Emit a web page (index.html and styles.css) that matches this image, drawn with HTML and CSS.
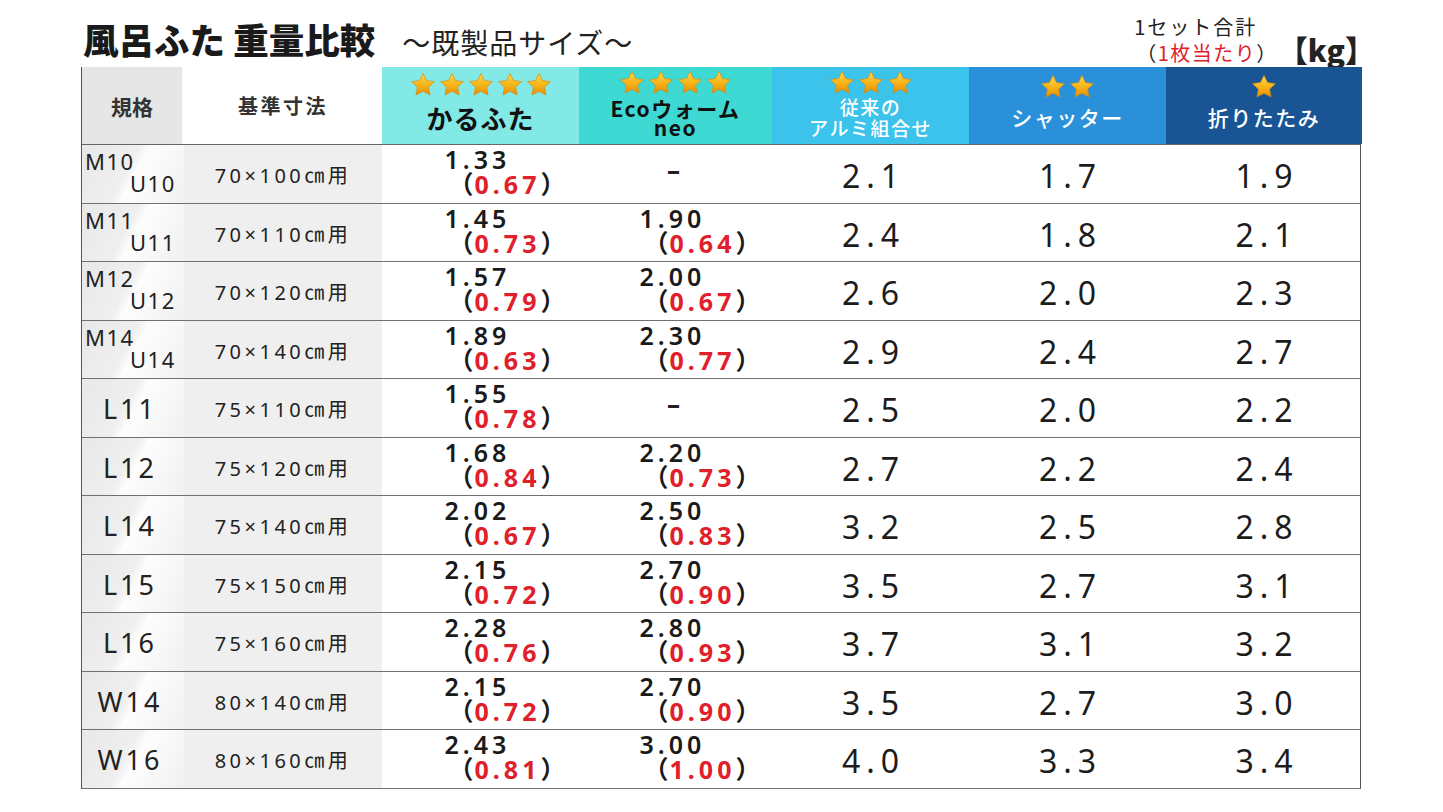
FILE: index.html
```html
<!DOCTYPE html>
<html lang="ja">

<head>
    <meta charset="UTF-8">
    <title>風呂ふた 重量比較</title>
    <link rel="stylesheet" href="styles.css">
</head>

<body>
    <svg class="defs" width="0" height="0">
        <defs>
            <linearGradient id="gold" x1="0" y1="0" x2="0" y2="1">
                <stop offset="0" stop-color="#ffd84a" />
                <stop offset="0.55" stop-color="#f7b319" />
                <stop offset="1" stop-color="#e48d05" />
            </linearGradient>
            <symbol id="star" viewBox="0 0 24 24">
                <path d="M12 1.2l3.2 6.7 7.3 1-5.3 5.1 1.3 7.3L12 17.8l-6.5 3.5 1.3-7.3-5.3-5.1 7.3-1z" fill="url(#gold)" stroke="#d9870a" stroke-width="0.6" />
            </symbol>
        </defs>
    </svg>

    <div class="sheet">
        <div class="top">
            <h1 class="title">風呂ふた 重量比較<span class="sub">～既製品サイズ～</span></h1>
            <div class="unit">
                <div class="unit-note">
                    <div>1セット合計</div>
                    <div class="unit-each">（<span class="red">1枚当たり</span>）</div>
                </div>
                <div class="unit-kg">【kg】</div>
            </div>
        </div>

        <div class="chart">
            <div class="row head">
                <div class="hc hc-size">規格</div>
                <div class="hc hc-dim">基準寸法</div>
                <div class="hc hc-karu">
                    <div class="stars">
                        <svg class="star"><use href="#star" /></svg><svg class="star"><use href="#star" /></svg><svg class="star"><use href="#star" /></svg><svg class="star"><use href="#star" /></svg><svg class="star"><use href="#star" /></svg>
                    </div>
                    <div class="hname karu">かるふた</div>
                </div>
                <div class="hc hc-eco">
                    <div class="stars">
                        <svg class="star"><use href="#star" /></svg><svg class="star"><use href="#star" /></svg><svg class="star"><use href="#star" /></svg><svg class="star"><use href="#star" /></svg>
                    </div>
                    <div class="hname eco">Ecoウォーム<br>neo</div>
                </div>
                <div class="hc hc-alumi">
                    <div class="stars">
                        <svg class="star"><use href="#star" /></svg><svg class="star"><use href="#star" /></svg><svg class="star"><use href="#star" /></svg>
                    </div>
                    <div class="hname alumi">従来の<br>アルミ組合せ</div>
                </div>
                <div class="hc hc-shutter">
                    <div class="stars">
                        <svg class="star"><use href="#star" /></svg><svg class="star"><use href="#star" /></svg>
                    </div>
                    <div class="hname light">シャッター</div>
                </div>
                <div class="hc hc-fold">
                    <div class="stars">
                        <svg class="star"><use href="#star" /></svg>
                    </div>
                    <div class="hname light">折りたたみ</div>
                </div>
            </div>

            <!-- M / U sizes -->
            <div class="row">
                <div class="c-size mu"><span class="m">M10</span><span class="u">U10</span></div>
                <div class="c-dim">70×100㎝用</div>
                <div class="c-val"><div class="pair"><div class="w">1.33</div><div class="p">（<span class="red">0.67</span>）</div></div></div>
                <div class="c-val"><span class="none">–</span></div>
                <div class="c-num">2.1</div>
                <div class="c-num">1.7</div>
                <div class="c-num">1.9</div>
            </div>
            <div class="row">
                <div class="c-size mu"><span class="m">M11</span><span class="u">U11</span></div>
                <div class="c-dim">70×110㎝用</div>
                <div class="c-val"><div class="pair"><div class="w">1.45</div><div class="p">（<span class="red">0.73</span>）</div></div></div>
                <div class="c-val"><div class="pair"><div class="w">1.90</div><div class="p">（<span class="red">0.64</span>）</div></div></div>
                <div class="c-num">2.4</div>
                <div class="c-num">1.8</div>
                <div class="c-num">2.1</div>
            </div>
            <div class="row">
                <div class="c-size mu"><span class="m">M12</span><span class="u">U12</span></div>
                <div class="c-dim">70×120㎝用</div>
                <div class="c-val"><div class="pair"><div class="w">1.57</div><div class="p">（<span class="red">0.79</span>）</div></div></div>
                <div class="c-val"><div class="pair"><div class="w">2.00</div><div class="p">（<span class="red">0.67</span>）</div></div></div>
                <div class="c-num">2.6</div>
                <div class="c-num">2.0</div>
                <div class="c-num">2.3</div>
            </div>
            <div class="row">
                <div class="c-size mu"><span class="m">M14</span><span class="u">U14</span></div>
                <div class="c-dim">70×140㎝用</div>
                <div class="c-val"><div class="pair"><div class="w">1.89</div><div class="p">（<span class="red">0.63</span>）</div></div></div>
                <div class="c-val"><div class="pair"><div class="w">2.30</div><div class="p">（<span class="red">0.77</span>）</div></div></div>
                <div class="c-num">2.9</div>
                <div class="c-num">2.4</div>
                <div class="c-num">2.7</div>
            </div>

            <!-- L sizes -->
            <div class="row">
                <div class="c-size">L11</div>
                <div class="c-dim">75×110㎝用</div>
                <div class="c-val"><div class="pair"><div class="w">1.55</div><div class="p">（<span class="red">0.78</span>）</div></div></div>
                <div class="c-val"><span class="none">–</span></div>
                <div class="c-num">2.5</div>
                <div class="c-num">2.0</div>
                <div class="c-num">2.2</div>
            </div>
            <div class="row">
                <div class="c-size">L12</div>
                <div class="c-dim">75×120㎝用</div>
                <div class="c-val"><div class="pair"><div class="w">1.68</div><div class="p">（<span class="red">0.84</span>）</div></div></div>
                <div class="c-val"><div class="pair"><div class="w">2.20</div><div class="p">（<span class="red">0.73</span>）</div></div></div>
                <div class="c-num">2.7</div>
                <div class="c-num">2.2</div>
                <div class="c-num">2.4</div>
            </div>
            <div class="row">
                <div class="c-size">L14</div>
                <div class="c-dim">75×140㎝用</div>
                <div class="c-val"><div class="pair"><div class="w">2.02</div><div class="p">（<span class="red">0.67</span>）</div></div></div>
                <div class="c-val"><div class="pair"><div class="w">2.50</div><div class="p">（<span class="red">0.83</span>）</div></div></div>
                <div class="c-num">3.2</div>
                <div class="c-num">2.5</div>
                <div class="c-num">2.8</div>
            </div>
            <div class="row">
                <div class="c-size">L15</div>
                <div class="c-dim">75×150㎝用</div>
                <div class="c-val"><div class="pair"><div class="w">2.15</div><div class="p">（<span class="red">0.72</span>）</div></div></div>
                <div class="c-val"><div class="pair"><div class="w">2.70</div><div class="p">（<span class="red">0.90</span>）</div></div></div>
                <div class="c-num">3.5</div>
                <div class="c-num">2.7</div>
                <div class="c-num">3.1</div>
            </div>
            <div class="row">
                <div class="c-size">L16</div>
                <div class="c-dim">75×160㎝用</div>
                <div class="c-val"><div class="pair"><div class="w">2.28</div><div class="p">（<span class="red">0.76</span>）</div></div></div>
                <div class="c-val"><div class="pair"><div class="w">2.80</div><div class="p">（<span class="red">0.93</span>）</div></div></div>
                <div class="c-num">3.7</div>
                <div class="c-num">3.1</div>
                <div class="c-num">3.2</div>
            </div>

            <!-- W sizes -->
            <div class="row">
                <div class="c-size">W14</div>
                <div class="c-dim">80×140㎝用</div>
                <div class="c-val"><div class="pair"><div class="w">2.15</div><div class="p">（<span class="red">0.72</span>）</div></div></div>
                <div class="c-val"><div class="pair"><div class="w">2.70</div><div class="p">（<span class="red">0.90</span>）</div></div></div>
                <div class="c-num">3.5</div>
                <div class="c-num">2.7</div>
                <div class="c-num">3.0</div>
            </div>
            <div class="row">
                <div class="c-size">W16</div>
                <div class="c-dim">80×160㎝用</div>
                <div class="c-val"><div class="pair"><div class="w">2.43</div><div class="p">（<span class="red">0.81</span>）</div></div></div>
                <div class="c-val"><div class="pair"><div class="w">3.00</div><div class="p">（<span class="red">1.00</span>）</div></div></div>
                <div class="c-num">4.0</div>
                <div class="c-num">3.3</div>
                <div class="c-num">3.4</div>
            </div>
        </div>
    </div>
</body>

</html>
```

FILE: styles.css
```css
* {
    margin: 0;
    padding: 0;
    box-sizing: border-box;
}

body {
    font-family: "Noto Sans", "Noto Sans CJK JP", sans-serif;
    background: #fff;
    color: #222;
}

.defs {
    position: absolute;
    width: 0;
    height: 0;
}

.sheet {
    width: 1290px;
    margin-left: 81px;
}

.red {
    color: #e0202a;
}

/* title bar */

.top {
    height: 67px;
    display: flex;
    justify-content: space-between;
    align-items: flex-end;
}

.title {
    font-family: "Noto Sans CJK JP", sans-serif;
    font-size: 35.5px;
    font-weight: 900;
    color: #1a1a1a;
    letter-spacing: 0;
    padding-left: 2px;
    padding-bottom: 6px;
    line-height: 1.2;
}

.title .sub {
    font-size: 28px;
    font-weight: 400;
    color: #222;
    margin-left: 27px;
    letter-spacing: 1px;
}

.unit {
    display: flex;
    align-items: flex-end;
    padding-bottom: 1px;
}

.unit-note {
    font-family: "Noto Sans CJK JP", sans-serif;
    font-size: 20px;
    line-height: 26px;
    color: #222;
    letter-spacing: 2px;
}

.unit-each {
    padding-left: 2px;
    letter-spacing: 1.5px;
}

.unit-kg {
    font-family: "Noto Sans CJK JP", sans-serif;
    font-size: 30px;
    font-weight: 900;
    line-height: 34px;
    margin-left: 0;
    margin-right: -4px;
}

/* table */

.chart {
    width: 1280px;
    border-left: 1.5px solid #555;
    border-right: 1.5px solid #555;
}

.row {
    display: grid;
    grid-template-columns: 102px 198px 197px 193px 197px 197px 196px;
    height: 58.5px;
    border-bottom: 1.5px solid #707070;
}

.row.head {
    height: 78px;
    border-bottom: 1.5px solid #666;
}

.hc {
    display: flex;
    flex-direction: column;
    align-items: center;
    justify-content: center;
    font-family: "Noto Sans CJK JP", sans-serif;
    font-weight: 700;
}

.hc-size {
    background: #e6e6e6;
    border-right: 2px solid #fff;
    font-size: 21px;
    color: #333;
}

.hc-dim {
    background: #fff;
    font-size: 20px;
    letter-spacing: 2.5px;
    color: #333;
}

.hc-karu {
    background: #82e9e7;
}

.hc-eco {
    background: #3fd9d3;
}

.hc-alumi {
    background: #3bc3ec;
}

.hc-shutter {
    background: #2a90d9;
}

.hc-fold {
    background: #195595;
}

.stars {
    display: flex;
    gap: 3px;
    height: 25px;
    margin-top: -4px;
    margin-bottom: 1px;
}

.star {
    width: 26px;
    height: 26px;
}

.hname {
    text-align: center;
}

.hname.karu {
    font-size: 26px;
    line-height: 34px;
    color: #111;
    letter-spacing: 1px;
    margin-top: 3px;
}

.hname.eco {
    font-size: 21px;
    line-height: 19px;
    color: #111;
    letter-spacing: 1.5px;
    padding-top: 3px;
}

.hname.alumi {
    font-size: 19px;
    font-weight: 500;
    line-height: 21px;
    color: #fff;
    letter-spacing: 1.5px;
}

.hname.light {
    font-size: 21px;
    font-weight: 500;
    line-height: 34px;
    color: #fff;
    letter-spacing: 1.5px;
}

/* body cells */

.c-size {
    background: linear-gradient(118deg, #e8e8e8 0%, #efefef 44%, #fdfdfd 52%, #f6f6f6 80%, #f0f0f0 100%);
    display: flex;
    align-items: center;
    justify-content: center;
    font-size: 27px;
    letter-spacing: 3px;
    color: #222;
    padding-top: 2px;
    padding-right: 6px;
}

.c-size.mu {
    display: block;
    position: relative;
    font-size: 22px;
    letter-spacing: 1.5px;
}

.c-size.mu .m {
    position: absolute;
    left: 3px;
    top: 4px;
    line-height: 24px;
}

.c-size.mu .u {
    position: absolute;
    left: 48px;
    top: 25px;
    line-height: 26px;
}

.c-dim {
    background: #efefef;
    display: flex;
    align-items: center;
    justify-content: center;
    font-family: "Noto Sans", "Noto Sans CJK JP", sans-serif;
    font-size: 20px;
    letter-spacing: 3.5px;
    color: #222;
    padding-top: 2px;
    padding-right: 0;
}

.c-val {
    display: flex;
    align-items: center;
    justify-content: center;
    padding-left: 50px;
}

.pair {
    font-size: 25px;
    font-weight: 600;
    letter-spacing: 4px;
    line-height: 24px;
    color: #1a1a1a;
    padding-bottom: 4px;
}

.pair .p {
    font-family: "Noto Sans CJK JP", sans-serif;
    margin-left: 4px;
    letter-spacing: 1px;
}

.pair .p .red {
    font-family: "Noto Sans", sans-serif;
    letter-spacing: 4px;
    font-weight: 700;
}

.none {
    font-size: 26px;
    font-weight: 700;
    margin-left: -54px;
    padding-bottom: 8px;
}

.c-num {
    display: flex;
    align-items: center;
    justify-content: center;
    font-size: 32px;
    letter-spacing: 6px;
    color: #1c1c1c;
    padding-top: 4px;
    padding-left: 6px;
}
```
